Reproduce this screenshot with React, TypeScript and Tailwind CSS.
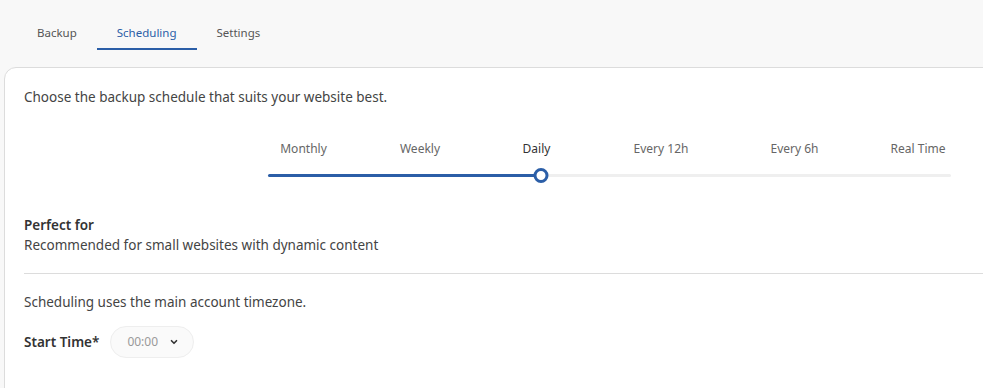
import { useState } from 'react'

const steps = [
  { label: 'Monthly', w: 'w-[71px]' },
  { label: 'Weekly', w: 'w-[162px]' },
  { label: 'Daily', w: 'w-[71px]' },
  { label: 'Every 12h', w: 'w-[178px]' },
  { label: 'Every 6h', w: 'w-[89px]' },
  { label: 'Real Time', w: 'w-[158px]' },
]
const tabs = ['Backup', 'Scheduling', 'Settings']

export default function App() {
  const [tab, setTab] = useState('Scheduling')
  const [step, setStep] = useState(2)
  const pct = (step / (steps.length - 1)) * 100

  return (
    <div className="h-[388px] w-[983px] overflow-hidden bg-[#f8f8f8] text-[#444] [font-family:'Noto_Sans','Open_Sans',sans-serif]">
      <div className="flex pl-[17px] pt-[18px]">
        {tabs.map((t) => (
          <button
            key={t}
            onClick={() => setTab(t)}
            className={`h-[32px] border-b-2 px-5 text-[11.5px] ${tab === t ? 'border-[#2b5ea7] text-[#2b5ea7]' : 'border-transparent text-[#555]'}`}
          >
            {t}
          </button>
        ))}
      </div>

      <div className="ml-[4px] mt-[17px] w-[990px] rounded-tl-xl border border-[#dcdcdc] bg-white pl-[19px] pt-[19px] pb-10">
        <p className="text-[13.5px] leading-5 text-[#444]">Choose the backup schedule that suits your website best.</p>

        <div className="ml-[244px] mt-[32px] w-[683px]">
          {/* label cells are sized so each label sits centred where the original has it */}
          <div className="flex whitespace-nowrap">
            {steps.map((s, i) => (
              <button
                key={s.label}
                onClick={() => setStep(i)}
                className={`${s.w} shrink-0 text-center text-[12px] leading-5 ${i === step ? 'text-[#333]' : 'text-[#666]'}`}
              >
                {s.label}
              </button>
            ))}
          </div>
          <div className="relative mt-[9px] h-[14px]">
            <div className="absolute left-0 right-0 top-[6px] h-[3px] rounded-full bg-[#efefef]" />
            <div className="absolute left-0 top-[6px] h-[3px] rounded-full bg-[#2b5ea7]" style={{ width: `${pct}%` }} />
            <div
              className="absolute top-0 h-[15px] w-[15px] -translate-x-1/2 rounded-full border-[3px] border-[#2b5ea7] bg-white"
              style={{ left: `${pct}%` }}
            />
          </div>
        </div>

        <div className="mt-[33px]">
          <p className="text-[13.5px] font-semibold leading-5 text-[#333]">Perfect for</p>
          <p className="text-[13.5px] leading-5 text-[#444]">Recommended for small websites with dynamic content</p>
        </div>

        <div className="mt-[18px] h-px bg-[#dcdcdc]" />

        <p className="mt-[18px] text-[13.5px] leading-5 text-[#444]">Scheduling uses the main account timezone.</p>

        <div className="mt-[14px] flex items-center gap-[11px]">
          <span className="text-[13.5px] font-semibold text-[#333]">Start Time*</span>
          <button className="flex h-[32px] w-[84px] items-center justify-between rounded-full border border-[#eeeeee] bg-[#fafafa] pl-[16px] pr-[14px]">
            <span className="text-[12px] text-[#999]">00:00</span>
            <svg width="10" height="10" viewBox="0 0 24 24" fill="none" stroke="#333" strokeWidth="4" strokeLinecap="round" strokeLinejoin="round">
              <path d="M6 9l6 6 6-6" />
            </svg>
          </button>
        </div>
      </div>
    </div>
  )
}
